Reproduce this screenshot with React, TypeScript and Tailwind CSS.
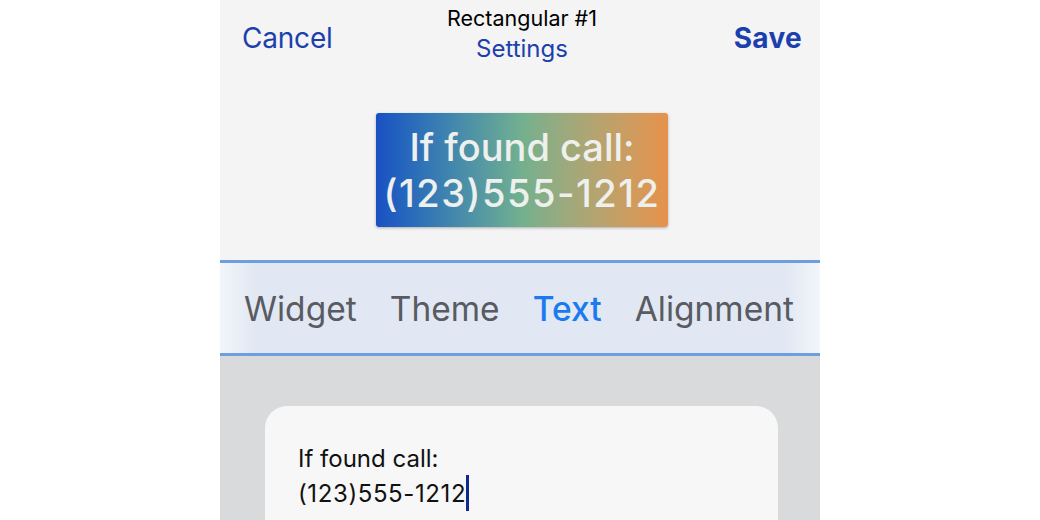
import React from "react";

const tabs = [
  { label: "Widget", active: false },
  { label: "Theme", active: false },
  { label: "Text", active: true },
  { label: "Alignment", active: false },
];

export default function App() {
  return (
    <div className="w-[1040px] h-[520px] bg-white flex justify-center overflow-hidden font-['Inter',sans-serif]">
      <div className="w-[600px] h-full flex flex-col bg-[#d9dadc]">
        {/* Header */}
        <div className="bg-[#f4f4f4] h-[260px] flex flex-col">
          <div className="h-[80px] pl-[22px] pr-[18px] grid grid-cols-[1fr_auto_1fr] items-start">
            <span className="mt-[17px] text-[28px] text-[#1c3fae] tracking-[-0.2px] justify-self-start">Cancel</span>
            <div className="flex flex-col items-center pt-[4px]">
              <span className="text-[21.5px] leading-[28px] text-black">Rectangular #1</span>
              <span className="text-[24px] leading-[34px] text-[#1c3fae]">Settings</span>
            </div>
            <span className="mt-[17px] text-[28px] font-bold text-[#1c3fae] justify-self-end tracking-[0.3px]">Save</span>
          </div>

          {/* Preview badge */}
          <div className="flex justify-center pt-[33px] pl-[4px]">
            <div className="w-[292px] h-[114px] rounded-[3px] bg-gradient-to-r from-[#1b4fc4] via-[#72b08e] to-[#e6924a] shadow-[0_1px_3px_rgba(0,0,0,0.3)] flex flex-col items-center justify-center text-[#eef0ee] text-[38px] leading-[46px] font-medium">
              <span>If found call:</span>
              <span className="tracking-[1.5px]">(123)555-1212</span>
            </div>
          </div>
        </div>

        {/* Tab bar */}
        <div className="h-[96px] border-y-[3px] border-[#6d9fdf] bg-[linear-gradient(to_right,#f2f5fa,#e1e8f3_6%,#e1e8f3_94%,#f2f5fa)] flex items-center justify-between pl-[24px] pr-[26px] pt-[3px]">
          {tabs.map((t) => (
            <span
              key={t.label}
              className={`text-[33.5px] ${t.active ? "text-[#1a7af0] font-medium" : "text-[#595b62]"}`}
            >
              {t.label}
            </span>
          ))}
        </div>

        {/* Text editor card */}
        <div className="flex-1 px-[45px] pt-[50px] pr-[42px]">
          <div className="h-full bg-[#f7f7f7] rounded-t-[22px] px-[33px] pt-[36px] text-[24px] leading-[33px] text-[#111]">
            <div>If found call:</div>
            <div className="flex items-center">
              <span className="tracking-[0.6px]">(123)555-1212</span>
              <span className="w-[3px] h-[36px] bg-[#0f2a8a]" />
            </div>
          </div>
        </div>
      </div>
    </div>
  );
}
